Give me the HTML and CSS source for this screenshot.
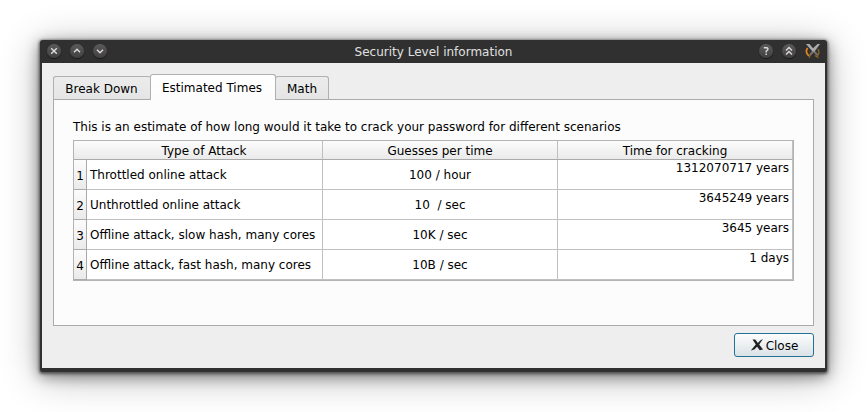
FILE: index.html
```
<!DOCTYPE html>
<html lang="en">
<head>
<meta charset="utf-8">
<title>Security Level information</title>
<link rel="stylesheet" href="styles.css">
</head>
<body>
<main class="window">
  <header class="titlebar">
    <div class="controls">
      <span class="control"><svg viewBox="0 0 14 14"><path d="M4.2 4.2l5.6 5.6M9.8 4.2l-5.6 5.6"/></svg></span>
      <span class="control"><svg viewBox="0 0 14 14"><path d="M4 8.3l3-3 3 3"/></svg></span>
      <span class="control"><svg viewBox="0 0 14 14"><path d="M4 5.8l3 3 3-3"/></svg></span>
    </div>
    <h1 class="title">Security Level information</h1>
    <div class="controls controls-right">
      <span class="control"><svg viewBox="0 0 14 14"><path d="M4.8 3.7h2.8q1.6.2 1.3 1.7L7.2 7.2v1.3M7.2 9.6v1.4"/></svg></span>
      <span class="control"><svg viewBox="0 0 14 14"><path d="M4 6.6l3-3 3 3M4 10.4l3-3 3 3"/></svg></span>
      <svg class="app-icon" viewBox="0 0 16 16">
        <path d="M2.6 5Q-.4 9 3.8 12.8" fill="none" stroke="#e5871c" stroke-width="1.7"/>
        <path d="M12.8 6q2.4 3.5-.3 7M5.5 11L4 14.8M10 12.5l3.5 2.2" fill="none" stroke="#94691f" stroke-width="1.3"/>
        <path d="M5 12l3.5-4 4 4" fill="none" stroke="#77736b" stroke-width="2"/>
        <path d="M1 1h3.5L8 5.2 12.5 1H15L9.5 8.4 7.5 8.6z" fill="#aaa"/>
      </svg>
    </div>
  </header>
  <section class="content">
    <nav class="tabs">
      <div class="tab tab-first">Break Down</div>
      <div class="tab tab-active">Estimated Times</div>
      <div class="tab tab-last">Math</div>
    </nav>
    <div class="panel">
      <p class="intro">This is an estimate of how long would it take to crack your password for different scenarios</p>
      <table class="estimates">
        <colgroup><col class="col-num"><col class="col-type"><col class="col-rate"><col class="col-time"></colgroup>
        <thead><tr><th class="type-head" colspan="2">Type of Attack</th><th>Guesses per time</th><th>Time for cracking</th></tr></thead>
        <tbody>
          <tr><th>1</th><td>Throttled online attack</td><td class="rate">100 / hour</td><td class="time">1312070717 years</td></tr>
          <tr><th>2</th><td>Unthrottled online attack</td><td class="rate">10&nbsp; / sec</td><td class="time">3645249 years</td></tr>
          <tr><th>3</th><td>Offline attack, slow hash, many cores</td><td class="rate">10K / sec</td><td class="time">3645 years</td></tr>
          <tr><th>4</th><td>Offline attack, fast hash, many cores</td><td class="rate">10B / sec</td><td class="time">1 days</td></tr>
        </tbody>
      </table>
    </div>
    <button class="close" type="button">
      <svg viewBox="0 0 14 14"><path d="M2.5 1.5h2.8l2.6 3.4L10.2 2.4 13 1 9.2 6.4l3.8 5-3.2.8-2.7-3.5-2.8 2.7L.8 12.6l5-6z"/></svg>
      Close
    </button>
  </section>
</main>
</body>
</html>
```
FILE: styles.css
```
* { box-sizing: border-box; }

body {
  margin: 0;
  padding: 40px;
  height: 412px;
  overflow: hidden;
  background: #fff;
  color: #000;
  font: 12px/14px "DejaVu Sans", sans-serif;
}

.window {
  width: 787px;
  height: 332px;
  padding: 0 2px 4px;
  background: #303030;
  border-radius: 3px;
  box-shadow: 0 1px 3px 1px #555, 0 4px 14px 1px rgba(0, 0, 0, .4), 0 5px 38px rgba(0, 0, 0, .3);
}

.titlebar {
  height: 23px;
  padding: 0 4px;
  display: grid;
  grid-template-columns: 80px 1fr 80px;
  align-items: center;
}

.controls { display: flex; align-items: center; gap: 9px; margin-top: -2px; padding-left: .5px; }
.controls-right { justify-content: flex-end; }

.control {
  width: 14px;
  height: 14px;
  border-radius: 50%;
  background: linear-gradient(#5c5a59, #414040);
  box-shadow: 0 1px 1px #191919;
}

.control svg {
  display: block;
  fill: none;
  stroke: #ddd;
  stroke-width: 1.4;
}

.app-icon { width: 16px; height: 16px; }

.title {
  margin: 0;
  padding-top: 1px;
  color: #e0e0e0;
  font-size: 12px;
  font-weight: 400;
  line-height: 22px;
  text-align: center;
}

.content {
  height: 305px;
  padding: 11px 11px 0;
  display: flex;
  flex-direction: column;
  background: #eee;
}

.tabs {
  height: 26px;
  flex: none;
  display: flex;
  align-items: flex-end;
  z-index: 1;
}

.tab {
  height: 24px;
  padding-top: 5px;
  border: 1px solid #b0b0b0;
  border-bottom-color: #aaa;
  border-radius: 3px 3px 0 0;
  background: linear-gradient(#ececec, #e5e5e5);
  text-align: center;
}

.tab-first { width: 98px; padding-right: 2px; border-right: 0; }
.tab-active {
  width: 126px;
  height: 26px;
  margin-left: -1px;
  padding: 6px 2px 0 0;
  border-bottom: 0;
  background: linear-gradient(#fff, #fcfcfc);
}
.tab-last { width: 54px; margin-left: -1px; }

.panel {
  height: 227px;
  margin-top: -1px;
  padding: 20px 19px;
  flex: none;
  border: 1px solid #aaa;
  background: #fcfcfc;
}

.intro { margin: 0 0 6px; white-space: nowrap; }

.estimates {
  width: 721px;
  table-layout: fixed;
  border-collapse: separate;
  border-spacing: 0;
  border: 1px solid #b3b3b3;
  background: #fff;
}

.col-num { width: 13px; }
.col-type { width: 236px; }
.col-rate { width: 235px; }
.col-time { width: 235px; }

.estimates th, .estimates td {
  padding: 0;
  border-right: 1px solid #c0c0c0;
  border-bottom: 1px solid #c0c0c0;
  white-space: nowrap;
}

.estimates th {
  height: 19px;
  padding-top: 2px;
  border-bottom-color: #aaa;
  background: linear-gradient(#fcfcfc, #eaeaea);
  font-weight: 400;
}

.estimates .type-head { padding-left: 12px; }
.estimates tbody th { height: 30px; padding-top: 2px; border-right-color: #aaa; }
.estimates td { height: 30px; padding-left: 3px; }
.estimates .rate { padding: 0; text-align: center; }
.estimates .time { padding: 1px 3px 0 0; text-align: right; vertical-align: top; }

.close {
  width: 80px;
  height: 24px;
  margin: 7px 0 0 auto;
  padding: 2px 0 0;
  flex: none;
  display: flex;
  align-items: center;
  justify-content: center;
  gap: 2px;
  border: 1px solid #237099;
  border-radius: 3px;
  background: linear-gradient(#fcfdfd, #dae2e6);
  color: #000;
  font: inherit;
}

.close svg { width: 14px; height: 14px; margin-top: -2px; fill: #222; }
```
